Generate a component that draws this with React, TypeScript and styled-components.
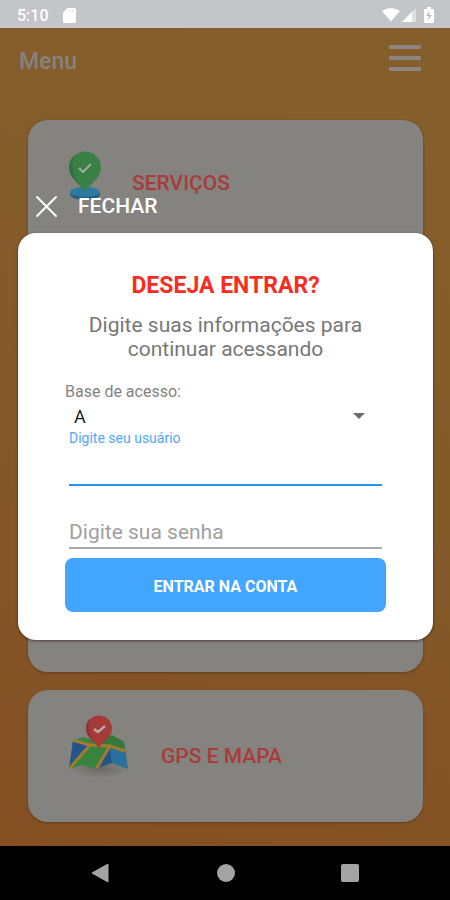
import React from 'react';
import styled, { createGlobalStyle } from 'styled-components';

const GlobalStyle = createGlobalStyle`
  * { box-sizing: border-box; }
  body { margin: 0; font-family: Roboto, "Liberation Sans", sans-serif; }
  button, input, select { font: inherit; }
  h1, h2, p { margin: 0; }
`;

const Screen = styled.div`
  display: flex;
  flex-direction: column;
  min-height: 100vh;
`;

const StatusBar = styled.div`
  display: flex;
  align-items: center;
  height: 28px;
  padding: 2px 15px 0 17px;
  color: #fff;
  background: #c4c5c9;
  font-size: 16px;
  font-weight: 500;
`;

const StatusIcons = styled.div`
  display: flex;
  align-items: center;
  margin-left: auto;
`;

const StatusClock = styled.span`
  margin-right: 14px;
`;

const AppArea = styled.div`
  position: relative;
  display: flex;
  flex: 1;
  flex-direction: column;
  background: linear-gradient(200deg, #855f2b, #845c2a 35%, #845023);
`;

const Header = styled.header`
  display: flex;
  align-items: center;
  justify-content: space-between;
  height: 66px;
  padding: 0 28px 0 19px;
`;

const HeaderTitle = styled.h1`
  color: #858380;
  font-size: 23px;
  font-weight: 500;
`;

const MenuButton = styled.button`
  display: flex;
  flex-direction: column;
  justify-content: space-between;
  width: 34px;
  height: 28px;
  margin-bottom: 6px;
  padding: 1px;
  border: 0;
  background: none;
`;

const MenuLine = styled.span`
  height: 4px;
  border-radius: 1px;
  background: #8c8582;
`;

const CardList = styled.main`
  display: flex;
  flex: 1;
  flex-direction: column;
  gap: 18px;
  padding: 26px 27px 24px 28px;
`;

const Card = styled.section<{ $grow?: boolean; $gap?: number; $lift?: number }>`
  display: flex;
  flex: ${(p) => (p.$grow ? '1' : '0 0 132px')};
  align-items: center;
  gap: ${(p) => p.$gap ?? 0}px;
  padding: 0 40px ${(p) => p.$lift ?? 0}px;
  border-radius: 20px;
  background: #85837f;
  box-shadow: 0 1px 3px rgba(50, 30, 10, 0.4);

  & > svg {
    margin-bottom: 14px;
  }
`;

const CardTitle = styled.h2`
  color: #a83c3a;
  font-size: 21px;
  font-weight: 500;
`;

const Overlay = styled.div`
  position: absolute;
  inset: 0;
  padding: 164px 17px 0 18px;
`;

const CloseButton = styled.button`
  display: flex;
  align-items: center;
  gap: 20px;
  height: 28px;
  margin-bottom: 13px;
  padding: 0 17px;
  border: 0;
  color: #fff;
  background: none;
  font-size: 21px;
  font-weight: 500;
`;

const Dialog = styled.form`
  display: flex;
  flex-direction: column;
  padding: 38px 47px 28px;
  border-radius: 18px;
  background: #fff;
  box-shadow: 0 1px 3px rgba(40, 20, 0, 0.6);
`;

const DialogTitle = styled.h2`
  color: #f92c20;
  font-size: 23px;
  font-weight: 700;
  line-height: 30px;
  text-align: center;
`;

const DialogText = styled.p`
  margin: 12px 0 21px;
  color: #777;
  font-size: 21px;
  line-height: 24px;
  text-align: center;
`;

const BaseLabel = styled.label`
  color: #828282;
  font-size: 16px;
  line-height: 20px;
`;

const SelectRow = styled.div`
  display: grid;
  align-items: center;
  grid-template-columns: 1fr 12px;
  padding-right: 21px;
`;

const BaseSelect = styled.select`
  grid-row: 1;
  grid-column: 1 / 3;
  height: 28px;
  padding: 0 9px;
  border: 0;
  color: #222;
  background: none;
  appearance: none;
  font-size: 18px;
`;

const Arrow = styled.svg`
  grid-row: 1;
  grid-column: 2;
  pointer-events: none;
`;

const Field = styled.div`
  display: flex;
  flex-direction: column;
  margin: 0 4px;
`;

const FieldLabel = styled.label`
  color: #50a8fc;
  font-size: 14px;
  line-height: 16px;
`;

const TextInput = styled.input<{ $active?: boolean }>`
  width: 100%;
  height: ${(p) => (p.$active ? 40 : 33)}px;
  margin-bottom: ${(p) => (p.$active ? 30 : 9)}px;
  padding: 0;
  border: 0;
  border-bottom: ${(p) => (p.$active ? '2px solid #2196f3' : '2px solid #aaa')};
  border-radius: 0;
  outline: none;
  color: #333;
  background: none;
  font-size: 21px;
  &::placeholder { color: #a0a0a0; opacity: 1; }
`;

const SubmitButton = styled.button`
  height: 54px;
  padding: 2px 0 0;
  border: 0;
  border-radius: 8px;
  color: #fff;
  background: #42a5ff;
  font-size: 16px;
  font-weight: 700;
`;

const NavBar = styled.nav`
  display: flex;
  align-items: center;
  justify-content: center;
  gap: 104px;
  height: 54px;
  background: #000;
`;

const NavButton = styled.button`
  display: flex;
  padding: 0;
  border: 0;
  background: none;
`;

const SdCard = () => (
  <svg width="13" height="15" viewBox="0 0 13 15" aria-hidden="true">
    <path d="M4.5 0H11.5Q13 0 13 1.5V13.5Q13 15 11.5 15H1.5Q0 15 0 13.5V5Z" fill="#fff" />
    <path d="M5 2v2M7.3 2v2M9.6 2v2" stroke="#dcdde0" strokeWidth="1" />
  </svg>
);

const SignalIcons = () => (
  <svg width="53" height="17" viewBox="0 0 53 17" aria-hidden="true">
    <path d="M0 4Q9 -2 18 4L9 14.5Z" fill="#fff" />
    <path d="M34 1V15H20Z" fill="#dedfe1" />
    <path d="M30 5V15H20Z" fill="#fff" />
    <path d="M45 0h4v2h2q1 0 1 1v12q0 1-1 1h-8q-1 0-1-1V3q0-1 1-1h2z" fill="#fff" />
    <path d="M48 4l-4 5h3l-1 4 4-5h-3z" fill="#b9babd" />
  </svg>
);

const ServicePin = () => (
  <svg width="34" height="50" viewBox="0 0 34 50" aria-hidden="true">
    <ellipse cx="17" cy="43" rx="15" ry="6" fill="#235d80" />
    <ellipse cx="17" cy="41" rx="15" ry="5" fill="#2c7a9e" />
    <path d="M17 41C14 34 1 28 1 16.500a16 16 0 0 1 32 0C33 28 20 34 17 41Z" fill="#388043" />
    <path d="M17 41C14 34 1 28 1 16.500a16 16 0 0 1 6-12.500Q-1 20 17 41Z" fill="#307540" />
    <path d="M11 17l4 4 8-8" fill="none" stroke="#a2aaa2" strokeWidth="2" />
  </svg>
);

const MapPin = () => (
  <svg width="62" height="68" viewBox="0 0 62 68" aria-hidden="true">
    <defs>
      <radialGradient id="mapShadow">
        <stop offset="0" stopColor="#6b6866" />
        <stop offset="1" stopColor="#85837f" />
      </radialGradient>
      <clipPath id="mapShape">
        <path d="M5 26L15 22 31 26 44 20 56 27 60 54 44 48 28 54 14 50 1 54Z" />
      </clipPath>
    </defs>
    <ellipse cx="31" cy="54" rx="30" ry="9" fill="url(#mapShadow)" />
    <g clipPath="url(#mapShape)">
      <path d="M0 18H62V56H0Z" fill="#38833f" />
      <path d="M0 25L22 30 1 53Z" fill="#25548a" />
      <path d="M42 31L44 48 28 54Z" fill="#25548a" />
      <path d="M42 31L62 37V56L44 48Z" fill="#2b6f9b" />
      <path d="M31 26L44 20 60 28V37L42 31Z" fill="#327b3d" />
      <path d="M4 25L22 30 1 54M22 30L42 31 60 37M42 31L27 56" fill="none" stroke="#a47b2e" strokeWidth="3" />
    </g>
    <path d="M31 33C28 27 18 23 18 13.500a13 13 0 0 1 26 0C44 23 34 27 31 33Z" fill="#a53b39" />
    <path d="M31 33C28 27 18 23 18 13.500A13 13 0 0 1 23 3Q16 16 31 33Z" fill="#8b3533" />
    <path d="M26 14l4 3 7-6" fill="none" stroke="#b5aaa8" strokeWidth="2.500" />
  </svg>
);

export default function App() {
  return (
    <>
      <GlobalStyle />
      <Screen>
        <StatusBar>
          <StatusClock>5:10</StatusClock>
          <SdCard />
          <StatusIcons><SignalIcons /></StatusIcons>
        </StatusBar>
        <AppArea>
          <Header>
            <HeaderTitle>Menu</HeaderTitle>
            <MenuButton type="button" aria-label="Abrir menu">
              <MenuLine /><MenuLine /><MenuLine />
            </MenuButton>
          </Header>
          <CardList>
            <Card $gap={30} $lift={6}>
              <ServicePin />
              <CardTitle>SERVIÇOS</CardTitle>
            </Card>
            <Card $grow />
            <Card $gap={31}>
              <MapPin />
              <CardTitle>GPS E MAPA</CardTitle>
            </Card>
          </CardList>
          <Overlay role="dialog" aria-labelledby="login-title">
            <CloseButton type="button">
              <svg width="23" height="23" viewBox="0 0 23 23" aria-hidden="true">
                <path d="M2 2L21 21M21 2L2 21" stroke="#fff" strokeWidth="2" strokeLinecap="round" />
              </svg>
              FECHAR
            </CloseButton>
            <Dialog onSubmit={(e) => e.preventDefault()}>
              <DialogTitle id="login-title">DESEJA ENTRAR?</DialogTitle>
              <DialogText>Digite suas informações para continuar acessando</DialogText>
              <BaseLabel htmlFor="base">Base de acesso:</BaseLabel>
              <SelectRow>
                <BaseSelect id="base" defaultValue="A">
                  <option value="A">A</option>
                </BaseSelect>
                <Arrow width="12" height="6" viewBox="0 0 12 6" aria-hidden="true">
                  <path d="M0 0H12L6 6Z" fill="#6b6b6b" />
                </Arrow>
              </SelectRow>
              <Field>
                <FieldLabel htmlFor="user">Digite seu usuário</FieldLabel>
                <TextInput id="user" type="text" $active />
                <TextInput type="password" placeholder="Digite sua senha" aria-label="Digite sua senha" />
              </Field>
              <SubmitButton type="submit">ENTRAR NA CONTA</SubmitButton>
            </Dialog>
          </Overlay>
        </AppArea>
        <NavBar>
          <NavButton type="button" aria-label="Voltar">
            <svg width="22" height="20" viewBox="0 0 22 20"><path d="M2 10L18 1V19Z" fill="#a3a3a3" stroke="#a3a3a3" strokeLinejoin="round" /></svg>
          </NavButton>
          <NavButton type="button" aria-label="Início">
            <svg width="20" height="20" viewBox="0 0 20 20"><circle cx="10" cy="10" r="9" fill="#a3a3a3" /></svg>
          </NavButton>
          <NavButton type="button" aria-label="Recentes">
            <svg width="20" height="20" viewBox="0 0 20 20"><rect x="1" y="1" width="18" height="18" rx="2" fill="#a3a3a3" /></svg>
          </NavButton>
        </NavBar>
      </Screen>
    </>
  );
}
